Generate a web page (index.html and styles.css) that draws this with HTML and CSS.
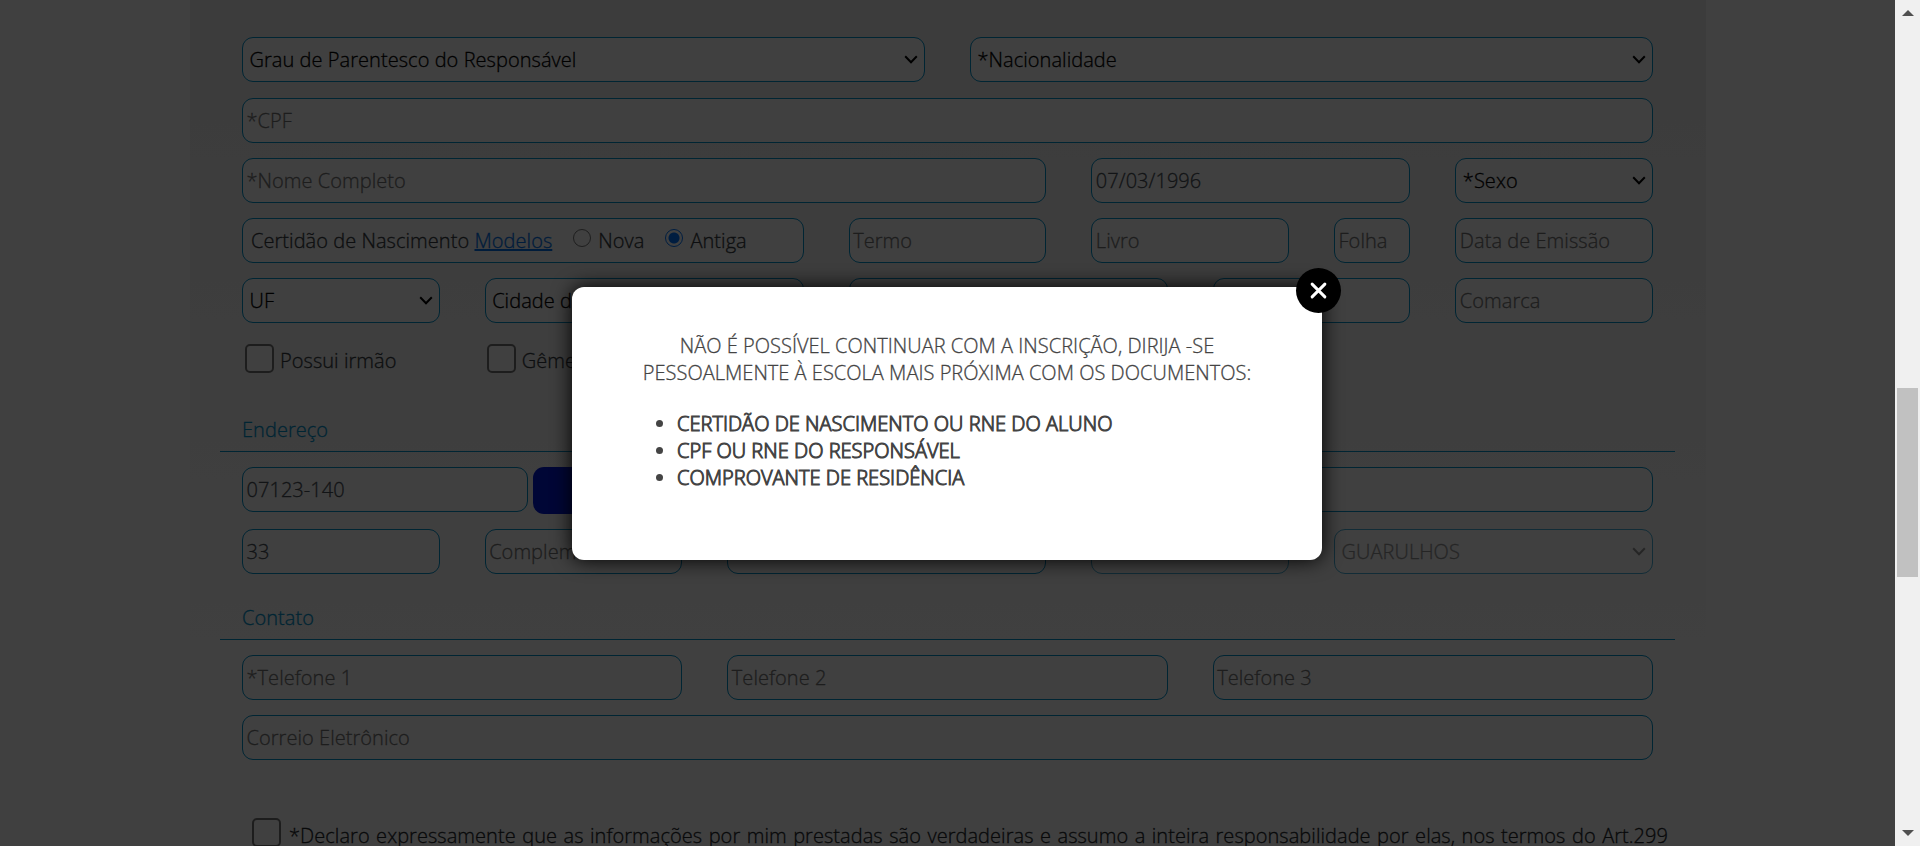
FILE: index.html
```html
<!DOCTYPE html>
<html lang="pt-BR">
<head>
<meta charset="utf-8">
<title>Inscrição</title>
<link rel="stylesheet" href="styles.css">
</head>
<body>
<svg class="defs" width="0" height="0"><symbol id="chev" viewBox="0 0 14 9"><path d="M1.2 1.3 7 7.2l5.8-5.9" fill="none" stroke="currentColor" stroke-width="2"/></symbol></svg>
<div class="viewport">
  <main class="page">
    <form class="panel">
      <div class="row r1">
        <div class="field select c6"><span>Grau de Parentesco do Responsável</span><svg class="chev"><use href="#chev"/></svg></div>
        <div class="field select c6"><span>*Nacionalidade</span><svg class="chev"><use href="#chev"/></svg></div>
      </div>
      <div class="row cpf"><div class="field c12">*CPF</div></div>
      <div class="row">
        <div class="field c7">*Nome Completo</div>
        <div class="field filled c3">07/03/1996</div>
        <div class="field select c2"><span>*Sexo</span><svg class="chev"><use href="#chev"/></svg></div>
      </div>
      <div class="row">
        <div class="field cert c5"><span>Certidão de Nascimento <a class="link">Modelos</a></span><i class="radio nova"></i><span>Nova</span><i class="radio on"></i><span>Antiga</span></div>
        <div class="field c2">Termo</div>
        <div class="field c2">Livro</div>
        <div class="field c1">Folha</div>
        <div class="field c2">Data de Emissão</div>
      </div>
      <div class="row">
        <div class="field select c2"><span>UF</span><svg class="chev"><use href="#chev"/></svg></div>
        <div class="field select c3"><span>Cidade d</span></div>
        <div class="field c3"></div>
        <div class="field c2"></div>
        <div class="field c2">Comarca</div>
      </div>
      <div class="row checks">
        <div class="check c2"><i class="box"></i><span>Possui irmão</span></div>
        <div class="check c2"><i class="box"></i><span>Gême</span></div>
      </div>
      <h2 class="title">Endereço</h2>
      <div class="row cep">
        <div class="field filled cep-input">07123-140</div>
        <div class="search"></div>
        <div class="field street"></div>
      </div>
      <div class="row">
        <div class="field filled c2">33</div>
        <div class="field c2">Complem</div>
        <div class="field c3"></div>
        <div class="field off c2"></div>
        <div class="field select off c3"><span>GUARULHOS</span><svg class="chev"><use href="#chev"/></svg></div>
      </div>
      <h2 class="title contact">Contato</h2>
      <div class="row">
        <div class="field c4">*Telefone 1</div>
        <div class="field c4">Telefone 2</div>
        <div class="field c4">Telefone 3</div>
      </div>
      <div class="row"><div class="field c12">Correio Eletrônico</div></div>
      <div class="declare"><i class="box"></i><p>*Declaro expressamente que as informações por mim prestadas são verdadeiras e assumo a inteira responsabilidade por elas, nos termos do Art.299</p></div>
    </form>
  </main>
  <aside class="scroll">
    <svg class="arrow" viewBox="0 0 12 6"><path d="M0 6 6 0l6 6z"/></svg>
    <div class="thumb"></div>
    <svg class="arrow down" viewBox="0 0 12 6"><path d="M0 0h12L6 6z"/></svg>
  </aside>
</div>
<div class="overlay">
  <section class="modal">
    <button class="close"><svg viewBox="0 0 16 16"><path d="M2 2l12 12M14 2 2 14"/></svg></button>
    <p>NÃO É POSSÍVEL CONTINUAR COM A INSCRIÇÃO, DIRIJA -SE<br>PESSOALMENTE À ESCOLA MAIS PRÓXIMA COM OS DOCUMENTOS:</p>
    <ul>
      <li>CERTIDÃO DE NASCIMENTO OU RNE DO ALUNO</li>
      <li>CPF OU RNE DO RESPONSÁVEL</li>
      <li>COMPROVANTE DE RESIDÊNCIA</li>
    </ul>
  </section>
</div>
</body>
</html>
```
FILE: styles.css
```css
* { box-sizing: border-box; }
html, body { margin: 0; height: 846px; overflow: hidden; }
body { font: 300 20px/27px "Open Sans", "Noto Sans", sans-serif; letter-spacing: .05px; -webkit-text-stroke: .3px; background: #fff; color: #212529; position: relative; }
.defs { position: absolute; }
.viewport { display: flex; height: 846px; }
.page { flex: 1; height: 846px; overflow: hidden; }
.panel { width: 1516px; margin-left: 190px; padding: 37px 52px 0 52px; height: 900px; background: linear-gradient(#ededed 0, #fff 720px); }
.row { display: grid; grid-template-columns: repeat(12, minmax(0, 1fr)); column-gap: 45px; margin-bottom: 15px; width: 1411px; }
.r1 { margin-bottom: 16px; }
.c1 { grid-column: span 1; } .c2 { grid-column: span 2; } .c3 { grid-column: span 3; }
.c4 { grid-column: span 4; } .c5 { grid-column: span 5; } .c6 { grid-column: span 6; }
.c7 { grid-column: span 7; } .c12 { grid-column: span 12; }
.field { height: 45px; border: 1px solid #0092cc; border-radius: 11px; padding: 0 3.5px; display: flex; align-items: center; color: #757575; background: #fff; white-space: nowrap; overflow: hidden; }
.filled { color: #495057; }
.select { color: #000; padding: 0 6px 0 6.5px; justify-content: space-between; }
.chev { width: 14px; height: 9px; flex: none; margin-top: -1px; }
.off { opacity: .7; color: #6b6b6b; }
.cert { color: #343a40; padding-left: 8px; }
.link { color: #0070ea; text-decoration: underline; }
.radio { width: 18px; height: 18px; border: 1.5px solid #767676; border-radius: 50%; margin: -5px 7px 0 21px; flex: none; }
.on { border-color: #0075ff; background: radial-gradient(circle, #0075ff 5px, #fff 6px); }
.checks { height: 44px; margin-bottom: 20px; }
.check { display: flex; padding: 6px 0 0 3px; white-space: nowrap; color: #343a40; }
.check + .check { padding-left: 2px; }
.box { width: 29px; height: 29px; border: 2px solid #767676; border-radius: 5px; background: #fff; flex: none; }
.check span { margin: 3px 0 0 6px; }
.title { margin: 0 0 15px -22px; padding: 0 0 8px 22px; width: 1455px; height: 50px; font: inherit; line-height: 55px; color: #0092cc; border-bottom: 1px solid #0092cc; }
.cep { display: flex; column-gap: 0; }
.cep-input { width: 286px; }
.search { width: 145px; height: 47px; margin: 0 50px 0 5px; border-radius: 11px; background: #0018d8; }
.street { flex: 1; }
.contact { margin-top: 16px; }
.declare { display: flex; margin-top: 58px; padding-left: 10px; color: #212529; }
.declare p { flex: none; margin: 4px 0 0 8px; width: 1379px; white-space: nowrap; text-align-last: justify; }
.scroll { width: 25px; background: #f0f0f0; display: flex; flex-direction: column; align-items: center; padding: 10px 0; position: relative; z-index: 3; }
.arrow { width: 12px; height: 6px; fill: #505050; }
.thumb { width: 21px; height: 189px; background: #c1c1c1; margin-top: 372px; }
.down { margin-top: auto; }
.overlay { position: absolute; left: 0; top: 0; width: 1895px; height: 846px; background: rgba(0,0,0,.75); display: flex; justify-content: center; align-items: center; }
.modal { position: relative; width: 750px; height: 273px; margin-top: 1px; margin-right: 1px; background: #fff; border-radius: 12px; box-shadow: 0 0 20px #000; padding: 45px 30px; color: #444; letter-spacing: .02px; }
.modal p { margin: 0 0 24px; text-align: center; }
.modal ul { margin: 0; padding-left: 75px; -webkit-text-stroke: 1px; }
.close { position: absolute; top: -19px; right: -19px; width: 45px; height: 45px; border: 0; border-radius: 50%; background: #000; padding: 14px; }
.close svg { display: block; width: 17px; height: 17px; fill: none; stroke: #fff; stroke-width: 2.8; stroke-linecap: round; }
```
